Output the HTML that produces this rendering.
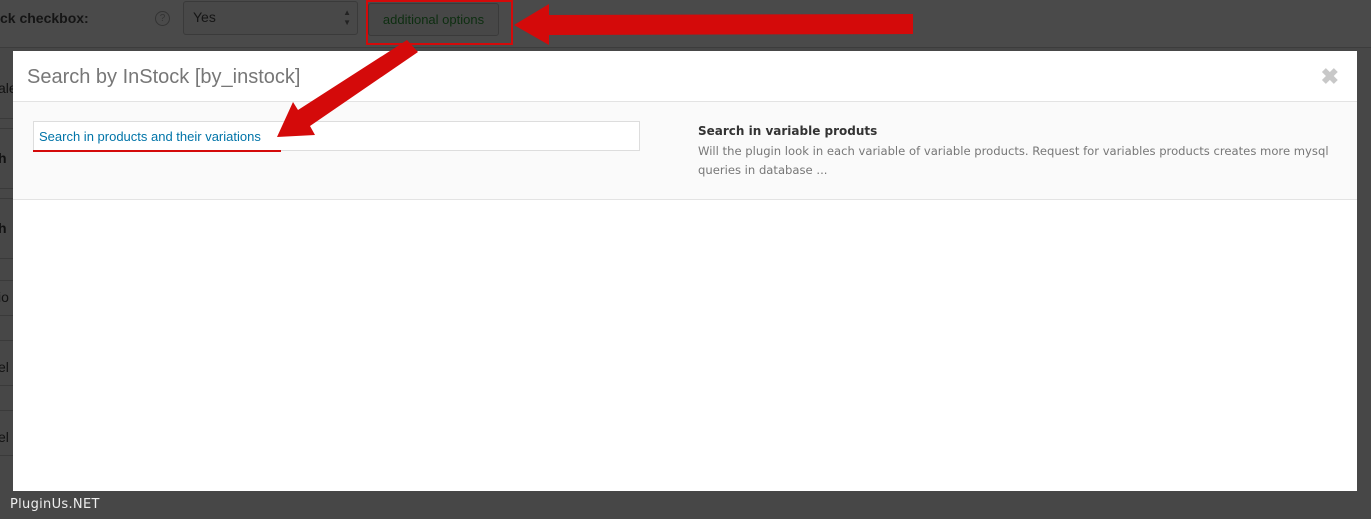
<!DOCTYPE html>
<html><head><meta charset="utf-8"><style>
*{margin:0;padding:0;box-sizing:border-box}
body{width:1371px;height:519px;overflow:hidden;background:#474747;font-family:"Liberation Sans",sans-serif;position:relative}
.abs{position:absolute}
.lt{color:#111;font-size:14px}
</style></head><body>
<div class="abs" style="left:0;top:0;width:1371px;height:48px;background:#4a4a4a;border-bottom:1px solid #3c3c3c"></div>
<div class="abs lt" style="left:0;top:10px;font-weight:bold;font-size:14px;color:#151515">ck checkbox:</div>
<div class="abs" style="left:155px;top:11px;width:15px;height:15px;border:1px solid #333;border-radius:50%;color:#333;font-size:10px;text-align:center;line-height:13px">?</div>
<div class="abs" style="left:183px;top:1px;width:175px;height:34px;border:1px solid #3a3a3a;border-radius:3px;background:#484848;color:#151515;font-size:14px;padding:7px 9px">Yes<span class="abs" style="right:6px;top:6px;font-size:8px;line-height:10px;color:#222">▲<br>▼</span></div>
<div class="abs" style="left:368px;top:3px;width:131px;height:33px;border:1px solid #3a3a3a;border-radius:3px;background:#474747;color:#0d2e10;font-size:13px;text-align:center;line-height:31px">additional options</div>
<div class="abs" style="left:366px;top:0px;width:147px;height:45px;border:2px solid #d40a0a"></div>
<div class="abs lt" style="left:-2px;top:80px">ale</div>
<div class="abs lt" style="left:-2px;top:150px;font-weight:bold">h</div>
<div class="abs lt" style="left:-2px;top:220px;font-weight:bold">h</div>
<div class="abs lt" style="left:-2px;top:289px">io</div>
<div class="abs lt" style="left:-2px;top:359px">el</div>
<div class="abs lt" style="left:-2px;top:429px">el</div>
<div class="abs" style="left:0;top:118px;width:13px;height:1px;background:#3a3a3a"></div>
<div class="abs" style="left:0;top:128px;width:13px;height:1px;background:#3a3a3a"></div>
<div class="abs" style="left:0;top:188px;width:13px;height:1px;background:#3a3a3a"></div>
<div class="abs" style="left:0;top:198px;width:13px;height:1px;background:#3a3a3a"></div>
<div class="abs" style="left:0;top:258px;width:13px;height:1px;background:#3a3a3a"></div>
<div class="abs" style="left:0;top:280px;width:13px;height:1px;background:#3a3a3a"></div>
<div class="abs" style="left:0;top:315px;width:13px;height:1px;background:#3a3a3a"></div>
<div class="abs" style="left:0;top:340px;width:13px;height:1px;background:#3a3a3a"></div>
<div class="abs" style="left:0;top:385px;width:13px;height:1px;background:#3a3a3a"></div>
<div class="abs" style="left:0;top:410px;width:13px;height:1px;background:#3a3a3a"></div>
<div class="abs" style="left:0;top:455px;width:13px;height:1px;background:#3a3a3a"></div>
<div class="abs" style="left:13px;top:51px;width:1344px;height:440px;background:#fff">
  <div style="height:51px;border-bottom:1px solid #e3e3e3;position:relative">
    <div class="abs" style="left:14px;top:15px;font-size:20px;color:#777;font-family:'Liberation Sans',sans-serif">Search by InStock [by_instock]</div>
    <div class="abs" style="right:18px;top:13px;font-size:22px;font-weight:bold;color:#c8c8c8">✖</div>
  </div>
  <div style="height:98px;background:#fafafa;border-bottom:1px solid #e3e3e3;position:relative">
    <div class="abs" style="left:20px;top:19px;width:607px;height:30px;border:1px solid #ddd;background:#fff;color:#0074a8;font-size:13px;padding:7px 5px">Search in products and their variations</div>
    <div class="abs" style="left:20px;top:48px;width:248px;height:2px;background:#d40a0a"></div>
    <div class="abs" style="left:685px;top:22px;font-size:12px;font-weight:bold;color:#333;font-family:'DejaVu Sans',sans-serif">Search in variable produts</div>
    <div class="abs" style="left:685px;top:40px;width:660px;font-size:11.6px;line-height:19px;color:#777;font-family:'DejaVu Sans',sans-serif">Will the plugin look in each variable of variable products. Request for variables products creates more mysql<br>queries in database ...</div>
  </div>
</div>
<div class="abs" style="left:10px;top:497px;color:#eee;font-size:13px;font-family:'DejaVu Sans',sans-serif;letter-spacing:0.3px">PluginUs.NET</div>
<svg class="abs" style="left:0;top:0" width="1371" height="519">
<polygon points="514,25 549,4 549,15 913,14 913,34 549,35 549,45" fill="#d40a0a"/>
<polygon points="407,40 418,52 310,126 315,135 277,137 293,102 298,110" fill="#d40a0a"/>
</svg>
</body></html>
